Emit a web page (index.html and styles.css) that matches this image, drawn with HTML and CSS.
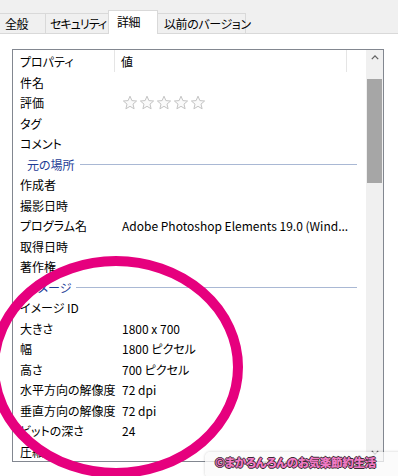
FILE: index.html
```html
<!DOCTYPE html>
<html lang="ja">
<head>
  <meta charset="UTF-8" />
  <title>プロパティ - 詳細</title>
  <link rel="stylesheet" href="styles.css">
</head>
<body>
  <div class="window">
    <div class="tabs">
      <div class="tab tab-general">全般</div>
      <div class="tab tab-security">セキュリティ</div>
      <div class="tab tab-details active">詳細</div>
      <div class="tab tab-versions">以前のバージョン</div>
    </div>

    <div class="panel">
      <div class="listbox">
        <div class="list">
          <div class="head">
            <div class="col-name">プロパティ</div>
            <div class="col-val">値</div>
            <div class="col-rest"></div>
          </div>

          <div class="row"><span class="name">件名</span><span class="val"></span></div>
          <div class="row">
            <span class="name">評価</span>
            <span class="val stars">
              <svg viewBox="0 0 16 16"><path d="M8 1.2l1.9 4.4 4.7.4-3.6 3.1 1.1 4.7L8 11.3 3.9 13.8l1.1-4.7L1.4 6l4.7-.4z"/></svg>
              <svg viewBox="0 0 16 16"><path d="M8 1.2l1.9 4.4 4.7.4-3.6 3.1 1.1 4.7L8 11.3 3.9 13.8l1.1-4.7L1.4 6l4.7-.4z"/></svg>
              <svg viewBox="0 0 16 16"><path d="M8 1.2l1.9 4.4 4.7.4-3.6 3.1 1.1 4.7L8 11.3 3.9 13.8l1.1-4.7L1.4 6l4.7-.4z"/></svg>
              <svg viewBox="0 0 16 16"><path d="M8 1.2l1.9 4.4 4.7.4-3.6 3.1 1.1 4.7L8 11.3 3.9 13.8l1.1-4.7L1.4 6l4.7-.4z"/></svg>
              <svg viewBox="0 0 16 16"><path d="M8 1.2l1.9 4.4 4.7.4-3.6 3.1 1.1 4.7L8 11.3 3.9 13.8l1.1-4.7L1.4 6l4.7-.4z"/></svg>
            </span>
          </div>
          <div class="row"><span class="name">タグ</span><span class="val"></span></div>
          <div class="row"><span class="name">コメント</span><span class="val"></span></div>

          <div class="group"><span>元の場所</span><i class="rule"></i></div>
          <div class="row"><span class="name">作成者</span><span class="val"></span></div>
          <div class="row"><span class="name">撮影日時</span><span class="val"></span></div>
          <div class="row"><span class="name">プログラム名</span><span class="val">Adobe Photoshop Elements 19.0 (Wind...</span></div>
          <div class="row"><span class="name">取得日時</span><span class="val"></span></div>
          <div class="row"><span class="name">著作権</span><span class="val"></span></div>

          <div class="group"><span>イメージ</span><i class="rule"></i></div>
          <div class="row"><span class="name">イメージ ID</span><span class="val"></span></div>
          <div class="row"><span class="name">大きさ</span><span class="val">1800 x 700</span></div>
          <div class="row"><span class="name">幅</span><span class="val">1800 ピクセル</span></div>
          <div class="row"><span class="name">高さ</span><span class="val">700 ピクセル</span></div>
          <div class="row"><span class="name">水平方向の解像度</span><span class="val">72 dpi</span></div>
          <div class="row"><span class="name">垂直方向の解像度</span><span class="val">72 dpi</span></div>
          <div class="row"><span class="name">ビットの深さ</span><span class="val">24</span></div>
          <div class="row"><span class="name">圧縮</span><span class="val"></span></div>
        </div>

        <div class="scrollbar">
          <div class="sb-btn">
            <svg viewBox="0 0 10 6"><path d="M1 5l4-4 4 4"/></svg>
          </div>
          <div class="sb-thumb"></div>
          <div class="sb-track"></div>
          <div class="sb-btn">
            <svg viewBox="0 0 10 6"><path d="M1 1l4 4 4-4"/></svg>
          </div>
        </div>
      </div>
    </div>

    <svg class="circle" viewBox="0 0 398 476">
      <ellipse cx="116" cy="367" rx="122" ry="106"/>
    </svg>

    <div class="watermark">©まかろんろんのお気楽節約生活</div>
  </div>
</body>
</html>
```

FILE: styles.css
```css
body {
  margin: 0;
  background: #fff;
  font-family: "Noto Sans CJK JP", "Liberation Sans", sans-serif;
  font-size: 12px;
  color: #000;
  font-feature-settings: "palt";
}

.window {
  position: relative;
  width: 398px;
  height: 476px;
  overflow: hidden;
}

/* tab strip */
.tabs {
  display: flex;
  align-items: flex-end;
  height: 34px;
  background: #f0f0f0;
  border-bottom: 1px solid #d9d9d9;
  box-sizing: border-box;
}

.tab {
  box-sizing: border-box;
  height: 20px;
  line-height: 19px;
  border: 1px solid #d9d9d9;
  border-bottom: none;
  margin-right: -1px;
  background: #f0f0f0;
  white-space: nowrap;
  letter-spacing: -0.4px;
}

.tab-general { width: 46px; padding-left: 5px; border-left: none; }
.tab-security { width: 64px; padding-left: 4px; letter-spacing: -1px; }
.tab-details { width: 50px; padding-left: 8px; }
.tab-versions { width: 89px; padding-left: 6px; }

.tab.active {
  position: relative;
  height: 24px;
  margin-bottom: -1px;
  line-height: 21px;
  background: #fff;
  z-index: 1;
}

/* panel */
.panel {
  padding: 15px 0 0 12px;
  background: #fff;
}

.listbox {
  display: flex;
  width: 372px;
  height: 413px;
  box-sizing: border-box;
  border: 1px solid #828790;
  overflow: hidden;
}

.list {
  flex: 1;
  overflow: hidden;
}

.head {
  display: flex;
  height: 22px;
  line-height: 24px;
}

.col-name {
  width: 102px;
  padding-left: 7px;
  box-sizing: border-box;
  border-right: 1px solid #e5e5e5;
}

.col-val {
  width: 232px;
  padding-left: 6px;
  box-sizing: border-box;
  border-right: 1px solid #e5e5e5;
}

.col-rest { flex: 1; }

.row {
  display: flex;
  align-items: center;
  height: 20.5px;
  white-space: nowrap;
}

.row .name {
  width: 109px;
  padding-left: 7px;
  box-sizing: border-box;
  flex: none;
}

.row .val { flex: 1; }

.stars {
  display: flex;
  gap: 1px;
}

.stars svg {
  width: 16px;
  height: 16px;
  fill: #fafafa;
  stroke: #c4c4c4;
  stroke-width: 1;
  stroke-linejoin: round;
}

.group {
  display: flex;
  align-items: center;
  height: 20.5px;
  padding: 0 9px 0 14px;
  color: #1e3c96;
}

.group .rule {
  flex: 1;
  height: 1px;
  margin-left: 5px;
  background: #a9b8d4;
}

/* scrollbar */
.scrollbar {
  display: flex;
  flex-direction: column;
  width: 17px;
  background: #f0f0f0;
}

.sb-btn {
  display: flex;
  align-items: center;
  justify-content: center;
  height: 17px;
  flex: none;
}

.sb-btn:first-child {
  height: 29px;
  align-items: flex-start;
  padding-top: 5px;
  box-sizing: border-box;
}

.sb-btn svg {
  width: 8px;
  height: 5px;
  fill: none;
  stroke: #606060;
  stroke-width: 1.6;
}

.sb-thumb {
  height: 104px;
  margin: 0 1px;
  background: #a6a6a6;
  flex: none;
}

.sb-track { flex: 1; }

/* annotations */
.circle {
  position: absolute;
  left: 0;
  top: 0;
  width: 398px;
  height: 476px;
  pointer-events: none;
}

.circle ellipse {
  fill: none;
  stroke: #e6007e;
  stroke-width: 10;
}

.watermark {
  position: absolute;
  left: 205px;
  top: 452px;
  width: 200px;
  height: 26px;
  box-sizing: border-box;
  padding: 2px 0 0 10px;
  background: rgba(250, 250, 250, 0.75);
  border-radius: 5px;
  box-shadow: 0 0 3px rgba(0, 0, 0, 0.2);
  font-size: 11.5px;
  font-weight: 900;
  color: #f07ac4;
  letter-spacing: -0.3px;
  white-space: nowrap;
  text-shadow: 1px 0 0 #3a2a33, -1px 0 0 #3a2a33, 0 1px 0 #3a2a33, 0 -1px 0 #3a2a33;
}
```
